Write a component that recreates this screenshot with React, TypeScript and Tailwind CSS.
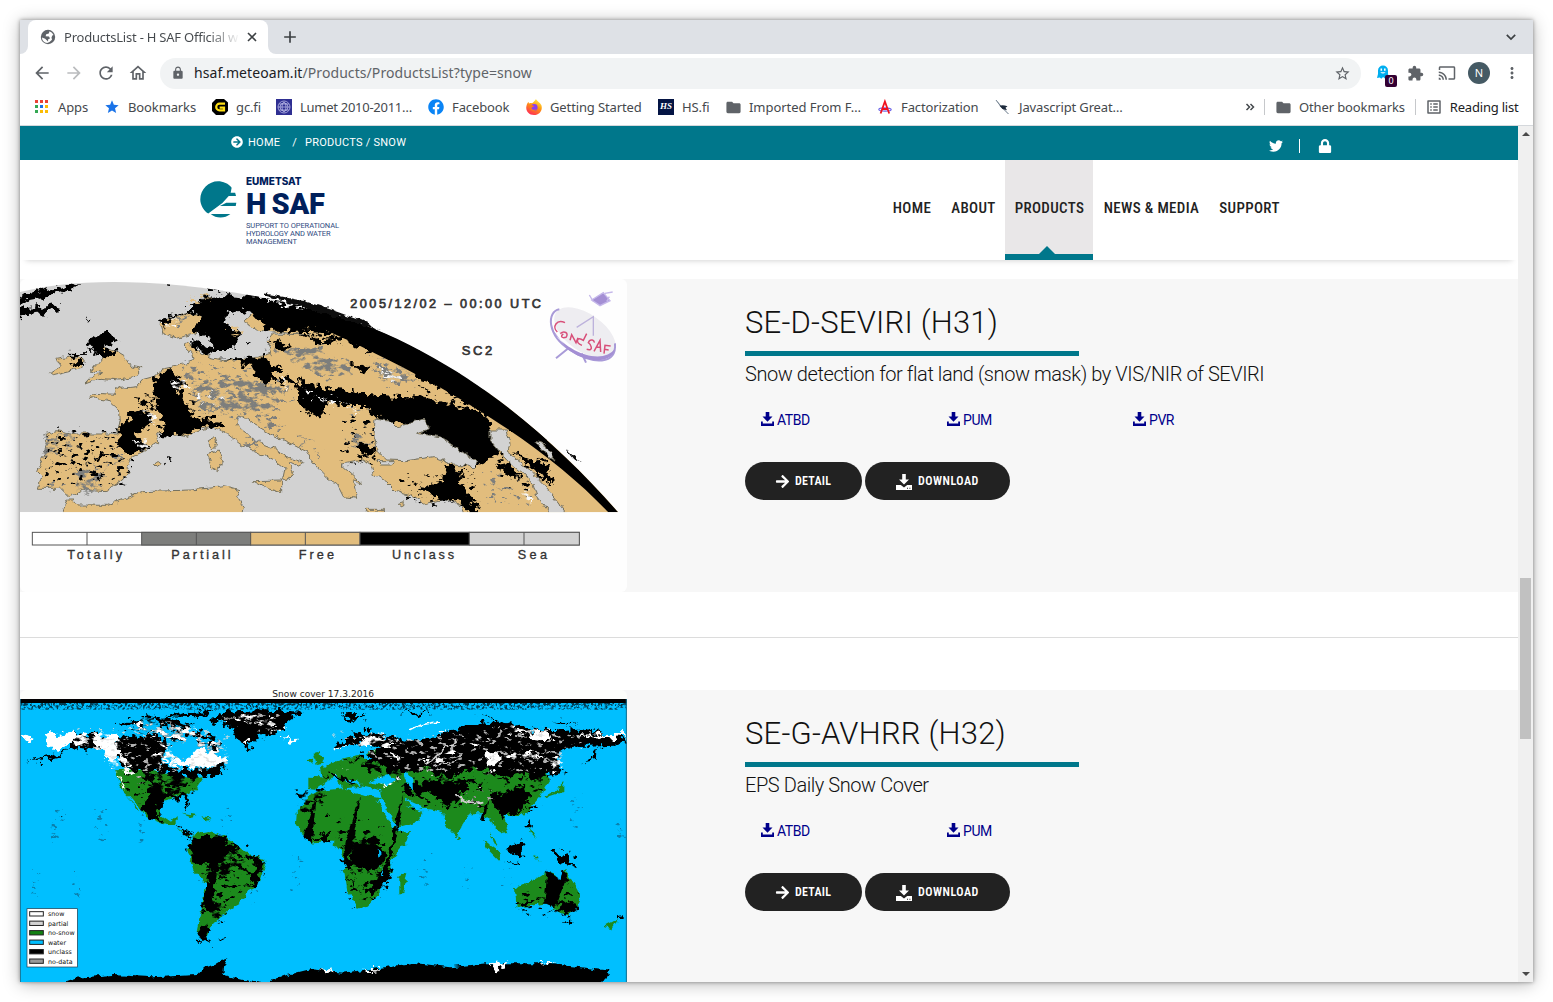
import React from "react";
import {
  MdArrowBack,
  MdArrowForward,
  MdRefresh,
  MdOutlineHome,
  MdLock,
  MdStarBorder,
  MdStar,
  MdExtension,
  MdCast,
  MdMoreVert,
  MdFolder,
  MdAdd,
  MdOutlineListAlt,
} from "react-icons/md";
import { FaTwitter, FaLock, FaArrowCircleRight, FaArrowRight, FaFacebook } from "react-icons/fa";

/* ---------- browser chrome ---------- */

function GlobeIcon() {
  return (
    <svg viewBox="0 0 16 16" className="size-4 shrink-0">
      <circle cx="8" cy="8" r="7.200" fill="#5f6368" />
      <path d="M9.500 2.200 8.800 4.500 6.200 5.200 5.600 7.200 9 7.500 10 9.500 8.200 10.200 8 12.500 5.200 9.800 1.900 8.400A6.200 6.200 0 0 0 7.200 14L9.500 13 12 10.800 11.500 8.500 12.300 6.500 13.500 6A6.200 6.200 0 0 0 9.500 2.200Z" fill="white" />
    </svg>
  );
}

function TabStrip() {
  return (
    <div className="flex h-[34px] shrink-0 bg-[#dee1e6]">
      <div className="w-2 bg-white">
        <div className="h-full rounded-br-lg bg-[#dee1e6]" />
      </div>
      <div className="flex w-60 items-center rounded-t-lg bg-white pl-3">
        <GlobeIcon />
        <span className="ml-2 w-[176px] overflow-hidden bg-linear-to-r from-[#45494d] from-82% to-transparent bg-clip-text pt-[2px] text-[13px] tracking-[-0.22px] whitespace-nowrap text-transparent">
          ProductsList - H SAF Official w
        </span>
        <svg viewBox="0 0 10 10" className="ml-[7px] size-[10px] shrink-0" stroke="#3c4043" strokeWidth="1.600">
          <path d="m1 1 8 8M9 1 1 9" />
        </svg>
      </div>
      <div className="w-2 bg-white">
        <div className="h-full rounded-bl-lg bg-[#dee1e6]" />
      </div>
      <div className="flex flex-1 items-center pr-[17px] pl-1">
        <MdAdd className="size-5 text-[#3c4043]" />
        <svg viewBox="0 0 10 10" className="ml-auto size-[10px]" fill="none" stroke="#3c4043" strokeWidth="1.700">
          <path d="m.8 2.800 4.200 4.200 4.200-4.200" />
        </svg>
      </div>
    </div>
  );
}

function Toolbar() {
  return (
    <div className="flex h-[38px] shrink-0 items-center bg-white text-[#5f6368]">
      <div className="flex w-[140px] items-center gap-3 pl-3">
        <MdArrowBack className="size-5" />
        <MdArrowForward className="size-5 text-[#babcbe]" />
        <MdRefresh className="size-5" />
        <MdOutlineHome className="size-5" />
      </div>
      <div className="flex h-[31px] w-[1201px] items-center rounded-full bg-[#f1f3f4] pr-[10px] pl-[11px]">
        <MdLock className="size-[14px]" />
        <span className="ml-[9px] pb-[2px] text-[14px] tracking-[0.08px]">
          <span className="text-[#202124]">hsaf.meteoam.it</span>/Products/ProductsList?type=snow
        </span>
        <MdStarBorder className="ml-auto size-[17px]" />
      </div>
      <div className="flex flex-1 items-center pl-[15px]">
        <div className="relative size-5">
          <svg viewBox="0 0 20 20" className="size-5">
            <path d="M1 15 2 11V7.500a5 5 0 0 1 10 0V11l1 3.500-2.500-.6-1.600 1.700-1.800-1.500-1.800 1.700-1.500-1.200Z" fill="#00aef0" />
            <path d="M4.500 5.500h1.600v2.200H4.500zM8 5.500h1.600v2.200H8zM4.200 9.200q2.700 2.600 5.400 0" fill="white" />
          </svg>
          <span className="absolute top-[12px] left-[9px] h-3 w-3 rounded-[2px] bg-[#330033] text-center text-[9px] leading-3 text-white">
            0
          </span>
        </div>
        <MdExtension className="ml-[11px] size-[17px]" />
        <MdCast className="ml-[14px] size-[18px]" />
        <span className="ml-[12px] flex size-[22px] items-center justify-center rounded-full bg-[#455a64] text-[11px] text-white">
          N
        </span>
        <MdMoreVert className="ml-[13px] size-[18px]" />
      </div>
    </div>
  );
}

function AppsIcon() {
  const colors = ["#ea4335", "#ea4335", "#ea4335", "#34a853", "#1a73e8", "#fbbc04", "#34a853", "#fbbc04", "#fbbc04"];
  return (
    <svg viewBox="0 0 16 16" className="size-4">
      {colors.map((c, i) => (
        <rect key={i} x={2 + (i % 3) * 5} y={1 + Math.floor(i / 3) * 5} width="3" height="3" fill={c} />
      ))}
    </svg>
  );
}

function GcIcon() {
  return (
    <svg viewBox="0 0 16 16" className="size-4">
      <path d="M4 0h8l4 3.500v3H16V12l-4 4H4l-4-4V4Z" fill="#000" />
      <path d="M13 4.700H7.500a3.200 3.200 0 0 0 0 6.600H12V8.600H7.600" fill="none" stroke="#ffe014" strokeWidth="2.200" />
    </svg>
  );
}

function LumetIcon() {
  return (
    <svg viewBox="0 0 16 16" className="size-4">
      <rect width="16" height="16" fill="#2f2f92" />
      <g fill="none" stroke="#b6b6e6" strokeWidth=".8">
        <circle cx="8" cy="8" r="6" />
        <circle cx="8" cy="8" r="4" />
        <ellipse cx="8" cy="8" rx="2" ry="5" />
        <path d="M2 8h12M3 5h10M3 11h10" />
      </g>
    </svg>
  );
}

function FirefoxIcon() {
  return (
    <svg viewBox="0 0 16 16" className="size-4">
      <defs>
        <linearGradient id="fox" x1=".8" y1="0" x2=".3" y2="1">
          <stop offset="0" stopColor="#fff44f" />
          <stop offset=".45" stopColor="#ff980e" />
          <stop offset="1" stopColor="#ff2a58" />
        </linearGradient>
      </defs>
      <path d="M10 0c.5 2 4 3 5.400 6.300C17 11 13.500 16 8 16S-.5 11.500.4 7.200C.8 5 1.700 3.600 2.600 3l.3 1.600C4 3.700 5 4 6 4.300 7.500 3 8.500 2.500 10 0Z" fill="url(#fox)" />
      <circle cx="8.200" cy="8.500" r="3.400" fill="#8a3ff0" />
      <path d="M3.200 6.200c2-.8 3.300.3 5 .6-.2 1.200-2.700 1-2.700 2.500 1 2.300 4 1.600 5.300.6-1 3-7.300 3.300-7.600-3.700Z" fill="#ff7a1c" />
    </svg>
  );
}

function FactorIcon() {
  return (
    <svg viewBox="0 0 16 16" className="size-4">
      <ellipse cx="8" cy="10.500" rx="6.200" ry="1.600" fill="none" stroke="#6a63e8" strokeWidth="1.200" />
      <path d="M3.600 14.500 7.900 2.500 12.200 14.500M5 10h6" fill="none" stroke="#f0121e" strokeWidth="1.800" />
    </svg>
  );
}

function GreatIcon() {
  return (
    <svg viewBox="0 0 16 16" className="size-4">
      <path d="M1 1 5 6.500 13.500 15 8 9.500Z" fill="#345" stroke="#678" strokeWidth=".6" />
      <path d="M4.500 6.800q3-1.500 8 .5L10.500 8.800l1.500 2.500-4.500-1.200Z" fill="#1d2a3c" />
    </svg>
  );
}

function Bookmark({ icon, label, className }: { icon: React.ReactNode; label: string; className: string }) {
  return (
    <div className={`flex shrink-0 items-center gap-2 whitespace-nowrap ${className}`}>
      {icon}
      <span className="pt-[2px]">{label}</span>
    </div>
  );
}

function BookmarksBar() {
  return (
    <div className="flex h-[34px] shrink-0 items-center border-b border-[#d5d8dc] bg-white pb-[3px] pl-[13px] text-[13px] tracking-[-0.12px] text-[#45494d]">
      <Bookmark className="w-[71px] gap-[9px]" icon={<AppsIcon />} label="Apps" />
      <Bookmark className="w-[108px]" icon={<MdStar className="size-4 text-[#1a73e8]" />} label="Bookmarks" />
      <Bookmark className="w-16" icon={<GcIcon />} label="gc.fi" />
      <Bookmark className="w-[152px] tracking-[-0.27px]" icon={<LumetIcon />} label="Lumet 2010-2011…" />
      <Bookmark className="w-[98px]" icon={<FaFacebook className="size-4 text-[#0a84f5]" />} label="Facebook" />
      <Bookmark className="w-[132px]" icon={<FirefoxIcon />} label="Getting Started" />
      <Bookmark
        className="w-[67px]"
        icon={
          <span className="flex size-4 items-center justify-center bg-[#041444] font-['Liberation_Serif'] text-[9px] font-bold text-white italic">
            HS
          </span>
        }
        label="HS.fi"
      />
      <Bookmark className="w-[152px] gap-[7px] tracking-[-0.05px]" icon={<MdFolder className="size-[17px] text-[#5f6368]" />} label="Imported From F…" />
      <Bookmark className="w-[118px]" icon={<FactorIcon />} label="Factorization" />
      <Bookmark className="w-[130px] tracking-[-0.15px]" icon={<GreatIcon />} label="Javascript Great…" />
      <svg viewBox="0 0 10 10" className="ml-[120px] size-[10px]" fill="none" stroke="#45494d" strokeWidth="1.500">
        <path d="m1.500 2 3 3-3 3M5.500 2l3 3-3 3" />
      </svg>
      <div className="ml-[9px] h-4 w-px bg-[#c6c8cb]" />
      <Bookmark className="ml-[10px] gap-[7px]" icon={<MdFolder className="size-[17px] text-[#5f6368]" />} label="Other bookmarks" />
      <div className="ml-[10px] h-4 w-px bg-[#c6c8cb]" />
      <Bookmark
        className="ml-[9px] gap-[7px] tracking-[-0.2px] text-[#202124]"
        icon={<MdOutlineListAlt className="size-[18px] text-[#5f6368]" />}
        label="Reading list"
      />
    </div>
  );
}

function Scrollbar() {
  return (
    <div className="flex w-[15px] shrink-0 flex-col items-center bg-[#f0f0f0]">
      <svg viewBox="0 0 8 4" className="mt-[6px] h-1 w-2">
        <path d="M0 4 4 0l4 4Z" fill="#4a4a4a" />
      </svg>
      <div className="mt-[442px] h-[161px] w-[11px] bg-[#c1c1c1]" />
      <svg viewBox="0 0 8 4" className="mt-auto mb-[6px] h-1 w-2">
        <path d="M0 0h8L4 4Z" fill="#4a4a4a" />
      </svg>
    </div>
  );
}

/* ---------- site header ---------- */

function TopBar() {
  return (
    <div className="flex h-[34px] shrink-0 bg-[#00778b] pl-[211px] text-[11px] tracking-[0.25px] text-white">
      <div className="flex h-8 items-center">
        <FaArrowCircleRight className="size-3" />
        <span className="ml-[5px] pt-[2px]">HOME</span>
        <span className="ml-[12px] pt-[2px]">/</span>
        <span className="ml-[8px] pt-[2px]">PRODUCTS / SNOW</span>
      </div>
      <div className="mr-[186px] ml-auto flex items-center pt-[6px]">
        <FaTwitter className="size-[14px]" />
        <div className="ml-[16px] h-[14px] w-px bg-white" />
        <FaLock className="ml-[18px] size-[14px]" />
      </div>
    </div>
  );
}

function Logo() {
  return (
    <div className="flex pt-4 pl-[180px] text-[#00205b]">
      <svg viewBox="0 0 38 38" className="mt-[5px] h-[37px] w-[37px]">
        <path
          d="M18.500.3C9 .3.300 8.500.300 18.900c0 5.600 3.400 11.600 8.200 14.500L23 22.500 29.500 15.300H37l-.9-3.300H31.500l1-5C29.500 2.600 23.500.3 18.500.3Z"
          fill="#00778b"
        />
        <path d="M27 22.300h10.300l-.6 3.300H20.500ZM11 33.800h20.200c-6 5-14.600 4.800-20.200 0Z" fill="#00778b" />
      </svg>
      <div className="ml-[9px] flex flex-col">
        <span className="font-[Inter] text-[10px] leading-[10px] font-extrabold">EUMETSAT</span>
        <span className="mt-[7px] text-[29px] leading-[23px] font-black tracking-[-0.1px] [word-spacing:-2px]">H SAF</span>
        <span className="mt-[6px] text-[7.500px] leading-[8px] tracking-[-0.09px] text-[#2f4a80]">
          SUPPORT TO OPERATIONAL
          <br />
          HYDROLOGY AND WATER
          <br />
          MANAGEMENT
        </span>
      </div>
    </div>
  );
}

function Nav() {
  const items = [
    { label: "HOME", w: "w-[59px]" },
    { label: "ABOUT", w: "w-16" },
    { label: "PRODUCTS", w: "w-[88px]" },
    { label: "NEWS & MEDIA", w: "w-[116px]" },
    { label: "SUPPORT", w: "w-20" },
  ];
  return (
    <nav className="mr-[229px] ml-auto flex h-full text-[15px] font-medium tracking-[0.35px] text-[#222] [font-stretch:75%]">
      {items.map((it) =>
        it.label === "PRODUCTS" ? (
          <div key={it.label} className={`relative flex h-full items-center justify-center border-b-6 border-[#00778b] bg-[#e9e7e8] pt-[3px] pl-px ${it.w}`}>
            {it.label}
            <svg viewBox="0 0 16 8" className="absolute bottom-0 left-[34px] h-2 w-4">
              <path d="M0 8 8 0l8 8Z" fill="#00778b" />
            </svg>
          </div>
        ) : (
          <div key={it.label} className={`flex h-full items-center justify-center pb-[3px] pl-px whitespace-nowrap ${it.w}`}>
            {it.label}
          </div>
        ),
      )}
    </nav>
  );
}

/* ---------- product pictures ---------- */

/* Displacement and grain filters that give the classified pixels ragged edges. */
function MapFilters() {
  return (
    <svg className="absolute size-0">
      <defs>
        <filter id="coast" x="-5%" y="-5%" width="110%" height="110%">
          <feTurbulence type="fractalNoise" baseFrequency=".05" numOctaves="2" seed="4" />
          <feDisplacementMap in="SourceGraphic" scale="20" xChannelSelector="R" yChannelSelector="G" />
        </filter>
        <filter id="ragged" x="-10%" y="-10%" width="120%" height="120%">
          <feTurbulence type="fractalNoise" baseFrequency=".045" numOctaves="3" seed="7" result="n" />
          <feDisplacementMap in="SourceGraphic" in2="n" scale="46" xChannelSelector="R" yChannelSelector="G" />
        </filter>
        <filter id="patchy" x="-10%" y="-10%" width="120%" height="120%">
          <feTurbulence type="fractalNoise" baseFrequency=".035 .06" numOctaves="4" seed="12" result="n" />
          <feColorMatrix in="n" values="0 0 0 0 0  0 0 0 0 0  0 0 0 0 0  6 0 0 0 -2.600" result="mask" />
          <feDisplacementMap in="SourceGraphic" in2="n" scale="60" xChannelSelector="B" yChannelSelector="G" result="d" />
          <feComposite in="d" in2="mask" operator="in" />
        </filter>
        <filter id="sparse" x="-10%" y="-10%" width="120%" height="120%">
          <feTurbulence type="fractalNoise" baseFrequency=".05 .08" numOctaves="3" seed="31" result="n" />
          <feColorMatrix in="n" values="0 0 0 0 0  0 0 0 0 0  0 0 0 0 0  0 10 0 0 -6.100" result="mask" />
          <feDisplacementMap in="SourceGraphic" in2="n" scale="50" xChannelSelector="B" yChannelSelector="R" result="d" />
          <feComposite in="d" in2="mask" operator="in" />
        </filter>
        <filter id="grain" x="-10%" y="-10%" width="120%" height="120%">
          <feTurbulence type="fractalNoise" baseFrequency=".13" numOctaves="3" seed="9" result="n" />
          <feColorMatrix in="n" values="0 0 0 0 0  0 0 0 0 0  0 0 0 0 0  0 4 0 0 -1.800" result="mask" />
          <feComposite in="SourceGraphic" in2="mask" operator="in" />
        </filter>
      </defs>
    </svg>
  );
}

function SeviriMap() {
  return (
    <svg viewBox="30 27 1821 939" preserveAspectRatio="none" className="h-[313px] w-[607px] rounded-md bg-[#fefefe]">
      <clipPath id="globe">
        <path d="M30 66C200 22 500 15 930 120C1300 225 1600 470 1825 727H30Z" />
      </clipPath>
      <g clipPath="url(#globe)">
        <rect x="30" y="27" width="1821" height="700" fill="#d2d2d2" />
        {/* land */}
        <g fill="#e2bd7d" stroke="#75715f" strokeWidth="3" filter="url(#coast)">
          <path d="M105 490 140 482 200 492 320 492 328 450 325 415 300 392 238 382 255 370 315 373 313 350 335 355 380 350 400 328 430 320 465 293 480 290 520 282 550 272 545 250 522 228 535 218 560 240 600 262 640 272 700 268 740 262 785 250 772 215 790 192 900 195 780 185 740 180 702 152 730 130 790 128 860 160 1000 170 1200 230 1830 600 1840 760H1375L1350 705 1325 690 1290 690 1240 702 1210 680 1160 665 1130 635 1090 612 1085 585 1060 570 1010 580 990 582 1055 640 1030 632 1040 685 1000 680 980 640 950 622 910 580 890 545 830 515 780 490 730 462 700 440 676 445 690 475 740 515 800 538 830 562 880 578 870 590 835 574 850 605 832 635 818 628 825 595 790 570 740 545 690 522 650 490 610 470 570 480 530 500 470 490 440 488 446 515 400 545 365 560 350 590 362 608 330 635 290 662 220 658 180 680 155 655 85 655 95 620 80 605 95 570 112 520Z" />
          <path d="M450 155 540 125 600 150 560 190 500 205 460 190Z" />
          <path d="M150 750 172 690 190 690 200 705 290 706 360 680 400 665 540 660 640 650 665 655 690 662 680 680 700 710 692 750Z" />
          <path d="M258 290 285 255 270 230 320 245 345 260 362 288 396 294 375 322 330 330 270 325 225 342 248 318 275 308 240 300Z" />
          <path d="M122 308 150 290 140 265 180 258 220 270 215 292 180 302 130 314Z" />
          <path d="M595 512 615 502 622 525 608 540 595 525ZM592 555 625 543 640 575 622 602 605 595ZM728 632 815 630 815 668 770 655Z" />
          <path d="M430 580 445 575 455 583 442 592ZM1065 718h55v8h-50ZM1165 700 1180 695 1178 708Z" />
        </g>
        <g fill="#d2d2d2" filter="url(#coast)">
          <path d="M650 130 715 120 690 160 720 200 760 205 775 250 700 240 690 200 650 160Z" />
        </g>
        {/* partial snow */}
        <g fill="#7d7e7c" filter="url(#patchy)">
          <path d="M560 340 640 325 720 320 830 355 830 375 760 385 760 430 660 430 560 410ZM600 350H800V425H620ZM740 430 830 470 800 480 750 460Z" />
          <path d="M770 230 930 230 1000 300 960 330 860 280ZM920 280 1000 260 1030 310 940 320ZM1080 290 1180 290 1230 330 1130 345Z" />
          <path d="M110 500 200 490 150 560 105 560ZM200 590 300 590 250 670 200 670ZM300 560 340 560 320 590ZM860 495 905 515 880 525ZM700 500 750 520 740 540ZM490 140 540 135 500 175Z" />
          <path d="M520 290 570 320 540 330ZM915 530 935 540 925 560ZM1000 505 1080 500 1100 520 1020 530Z" />
        </g>
        <g fill="#7d7e7c" filter="url(#sparse)">
          <path d="M110 490H340V640H200L110 660ZM520 280 800 290 850 400 760 450 560 430ZM1000 420H1100V540H1000ZM1430 610H1600V700H1430ZM1080 240 1210 270 1230 340 1080 300Z" />
        </g>
        {/* unclassified */}
        <g fill="#000" filter="url(#ragged)">
          <path d="M0 82 190 40 205 50 100 82 0 102ZM0 118 145 106 150 124 0 142ZM230 143 248 145 237 152ZM440 30 530 38 520 46ZM590 44 645 58 600 60Z" />
          <path d="M540 100 600 80 640 75 780 85 930 105 1110 150 1260 210 1440 320 1640 470 1640 510 1570 500 1480 455 1380 400 1290 350 1230 330 1180 265 1080 240 1000 215 960 190 880 185 780 185 740 140 700 120 650 130 640 160 690 190 670 240 610 240 600 200 540 180 575 145 540 130Z" />
          <path d="M450 145 540 125 470 155 465 180ZM540 215 610 235 600 255 545 235ZM708 208 724 216 710 225Z" />
          <path d="M240 210 290 185 325 212 280 228 315 250 290 265 235 238ZM180 278 220 273 218 295 190 292ZM175 248 235 250 200 260Z" />
          <path d="M435 320 480 295 530 350 500 350 530 395 545 440 645 450 640 467 560 475 535 498 450 492 480 460 440 420 440 370ZM325 475 370 430 400 415 435 455 370 495 425 535 370 548 330 530ZM385 393 435 402 400 412ZM450 430 540 430 540 495 470 480Z" />
          <path d="M640 266 760 262 820 300 790 300 800 345 750 330 715 285ZM860 335 930 350 1100 375 1230 380 1300 395 1380 415 1440 445 1450 495 1480 540 1420 585 1370 590 1300 540 1250 520 1200 460 1150 460 1100 445 1060 405 1000 405 950 400 930 450 870 410Z" />
          <path d="M812 318 870 330 830 348ZM1015 283 1075 293 1060 313ZM775 203 850 232 820 245ZM870 193 990 205 950 232Z" />
          <path d="M1240 660 1300 625 1310 590 1365 600 1345 640 1390 690 1415 740 1380 735 1340 690 1290 692ZM1455 588 1500 583 1545 625 1500 618ZM1500 540 1600 580 1630 640 1600 620ZM1045 518 1105 538 1060 562ZM1260 650 1230 680Z" />
          <path d="M145 492 168 492 155 515ZM235 538 268 536 248 550ZM250 560 305 558 260 577ZM320 520 350 512 415 530 350 550ZM462 570 484 572 470 580ZM192 578 218 580 200 592ZM258 620 278 622 262 634Z" />
        </g>
        <g fill="#000" filter="url(#sparse)">
          <path d="M110 480H360V640H110ZM380 370H560V480H380ZM1200 240 1400 360 1480 460 1380 430 1240 390ZM1000 440H1100V580H1000ZM1180 610H1400V700H1180ZM1440 560H1620V660H1500Z" />
        </g>
        <g fill="#e2bd7d" filter="url(#patchy)">
          <path d="M530 85 610 78 590 92 540 97ZM930 165 1080 185 1090 230 1000 210ZM1100 250 1200 285 1220 330 1150 290ZM1270 350 1360 410 1350 430 1280 380ZM1430 440 1540 490 1530 512 1470 485ZM660 165 695 190 670 195ZM870 178 960 210 940 225ZM1580 520 1650 565 1620 570Z" />
        </g>
        {/* solid rim along the limb */}
        <path d="M880 100C1300 225 1600 470 1825 727L1795 727C1600 520 1290 330 880 150Z" fill="#000" />
        <g fill="#d2d2d2" stroke="#75715f" strokeWidth="3" filter="url(#coast)">
          <path d="M1095 445 1140 450 1160 470 1240 450 1258 475 1220 490 1290 500 1400 575 1395 590 1330 585 1270 560 1190 572 1130 570 1105 545 1092 500Z" />
          <path d="M1440 480 1490 480 1500 520 1490 545 1560 600 1640 690 1690 760 1640 760 1580 680 1570 640 1490 570 1440 510Z" />
          <path d="M1575 515 1600 520 1635 570 1610 560ZM1100 575 1150 575 1145 585 1110 585Z" />
        </g>
        <g fill="#f8f8f8" filter="url(#patchy)">
          <path d="M455 160 490 145 490 175ZM400 425 440 430 430 465ZM460 335 525 328 530 352 480 348ZM370 508 425 513 390 548ZM550 378 660 368 640 392 560 392ZM880 353 920 368 900 380ZM920 378 1010 398 1050 425 960 400ZM1105 298 1165 320 1140 340ZM815 328 842 338 825 355ZM1540 655 1565 680 1550 705ZM760 88 840 94 900 118 840 108Z" />
        </g>
      </g>
      <path d="M765 70 880 92 960 118 1050 150 1112 180 1040 160 900 118 770 80ZM1665 536 1712 576 1690 568Z" fill="#111" filter="url(#coast)" />
      {/* legend */}
      <g stroke="#555" strokeWidth="3">
        <rect x="67" y="787" width="1641" height="38" fill="#fff" />
        <rect x="395" y="787" width="327" height="38" fill="#7d7e7c" />
        <rect x="722" y="787" width="328" height="38" fill="#e2bd7d" />
        <rect x="1050" y="787" width="328" height="38" fill="#000" />
        <rect x="1378" y="787" width="330" height="38" fill="#d2d2d2" />
        <path d="M231 787v38M559 787v38M886 787v38M1542 787v38" />
      </g>
      <g fill="#333" stroke="#333" strokeWidth="1" fontFamily="Liberation Sans" fontSize="38">
        <text x="172" y="867" textLength="164">Totally</text>
        <text x="484" y="867" textLength="178">Partiall</text>
        <text x="866" y="867" textLength="106">Free</text>
        <text x="1146" y="867" textLength="186">Unclass</text>
        <text x="1523" y="867" textLength="88">Sea</text>
        <text x="1021" y="114" textLength="572" fontSize="38" strokeWidth="2">
          2005/12/02 – 00:00 UTC
        </text>
        <text x="1355" y="254" textLength="92" fontSize="39" strokeWidth="2">
          SC2
        </text>
      </g>
      {/* satellite dish emblem */}
      <g>
        <ellipse cx="1725" cy="188" rx="106" ry="56" transform="rotate(35 1725 188)" fill="#eeedf1" />
        <path d="M1648 118C1610 125 1610 195 1680 240S1820 285 1815 220M1675 235 1638 265M1715 250 1728 278" fill="none" stroke="#a99bd8" strokeWidth="6" />
        <path d="M1700 172 1750 140V197" fill="none" stroke="#bdb2dc" strokeWidth="4" />
        <path d="M1625 175C1660 245 1780 290 1815 235 1810 285 1720 280 1670 235Z" fill="#a48fd4" />
        <path d="M1745 90 1780 68 1800 92 1770 107ZM1738 75 1750 95M1785 70 1808 66M1790 95 1798 80" fill="#a48fd4" stroke="#c5b8ea" strokeWidth="4" />
        <path
          d="M1675 152C1650 140 1635 165 1652 180M1661 185C1672 175 1688 182 1678 196 1665 200 1660 192 1670 186M1690 205 1695 188 1708 212 1714 197M1726 220C1705 212 1710 190 1730 205L1740 185M1740 232C1765 238 1750 215 1745 212 1750 198 1765 205 1762 212M1762 238 1780 205 1782 240M1768 226H1782M1792 245 1795 220 1812 222M1793 232 1806 234"
          transform="translate(-10 6)"
          fill="none"
          stroke="#d8507a"
          strokeWidth="4.500"
        />
      </g>
    </svg>
  );
}

function SnowCoverMap() {
  const legend = [
    ["snow", "#fff"],
    ["partial", "#d3d3d3"],
    ["no-snow", "#128012"],
    ["water", "#00bfff"],
    ["unclass", "#000"],
    ["no-data", "#999"],
  ];
  return (
    <svg viewBox="30 30 1821 876" preserveAspectRatio="none" className="h-[292px] w-[607px] rounded-t-md">
      <rect x="30" y="30" width="1821" height="876" fill="#fdfefb" />
      <text x="787" y="50" fontFamily="DejaVu Sans" fontSize="27" textLength="305" lengthAdjust="spacingAndGlyphs" fill="#222">
        Snow cover 17.3.2016
      </text>
      <rect x="30" y="57" width="1821" height="849" fill="#00bfff" />
      <rect x="30" y="57" width="1821" height="12" fill="#000" />
      <rect x="30" y="69" width="1821" height="9" fill="#002030" filter="url(#grain)" />
      <rect x="30" y="69" width="1821" height="20" fill="#003a50" filter="url(#grain)" />
      {/* snow free land */}
      <g fill="#1e8a1e" filter="url(#coast)">
        <path d="M312 268 400 265 500 285 560 292 582 288 555 330 530 345 450 365 450 405 480 425 500 405 500 435 470 435 410 410 390 385 360 350 330 320Z" />
        <path d="M352 348 388 392 380 390ZM515 398 560 405 545 410ZM570 412 608 415 590 422ZM500 440 530 470 545 472 520 455Z" />
        <path d="M555 460 600 453 640 470 690 500 712 520 762 540 765 558 742 618 710 632 690 668 650 690 640 705 605 735 590 770 560 755 590 610 550 572 533 510Z" />
        <path d="M860 398 895 350 925 333 1000 325 1050 345 1110 355 1145 420 1160 455 1200 453 1190 485 1140 545 1142 580 1108 615 1105 645 1070 680 1040 686 1012 630 1003 580 1008 550 988 510 965 482 900 488 880 465 858 430ZM1165 590 1192 575 1180 640 1165 640Z" />
        <path d="M895 290 935 292 930 265 960 250 1010 235 1060 225 1095 205 1200 240 1400 250 1560 240 1620 300 1590 350 1555 390 1535 405 1480 405 1495 455 1470 460 1440 420 1420 400 1380 400 1335 470 1310 440 1300 400 1230 385 1180 375 1240 395 1220 425 1155 445 1115 360 1110 330 1060 320 1040 300 1000 300 1060 320 1000 325 975 280 960 300 925 325 895 320ZM910 218 925 216 945 248 920 252ZM888 238 910 233 907 252Z" />
        <path d="M1420 480 1475 520 1470 545 1430 505ZM1440 455 1465 500 1450 490ZM1600 350 1640 330 1660 305 1660 335 1610 352ZM1585 320 1597 335 1583 337ZM1343 463 1354 478 1341 480ZM1555 458 1575 472ZM1558 438 1580 477 1558 452ZM1570 518 1592 550 1573 532Z" />
        <path d="M1515 625 1580 595 1610 575 1630 580 1650 605 1665 572 1690 605 1715 650 1695 690 1665 705 1610 670 1520 685ZM1782 740 1825 718 1805 748Z" />
      </g>
      {/* unclassified */}
      <g fill="#000" filter="url(#ragged)">
        <path d="M180 165 240 158 330 175 360 165 470 172 475 205 450 240 500 268 600 265 655 242 640 272 600 288 540 292 430 280 380 275 330 250 290 215 180 205ZM50 245 150 218 180 205 140 232Z" />
        <path d="M440 325 530 345 538 385 518 352 460 355 440 400 460 422 415 417 395 380 410 350ZM400 280 460 320 430 312ZM498 430 522 440 517 460 550 474Z" />
        <path d="M455 108 530 93 625 90 560 112ZM600 118 640 96 760 90 875 98 835 125 820 150 745 178 712 205 685 185 665 145ZM320 128 400 123 330 147ZM470 150 600 160 620 185 560 170ZM410 108 520 125 540 150 450 132Z" />
        <path d="M555 470 640 465 660 510 630 540 620 580 608 650 605 690 575 700 590 610 600 560 545 540 535 510ZM730 525 765 545 740 620 712 628 735 590ZM570 740 600 745 590 775 610 792 575 784 560 755ZM600 645 640 700 590 690ZM650 490 690 515 670 530ZM700 522 738 533 715 548Z" />
        <path d="M900 478 960 458 960 484ZM1150 440 1165 450 1145 545 1130 610 1100 640 1080 620 1135 530ZM1030 490 1100 480 1125 530 1100 570 1010 560ZM1015 590 1060 640 1100 620 1090 650 1030 615Z" />
        <path d="M970 205 1020 165 1070 155 1150 170 1180 185 1280 170 1320 150 1400 135 1470 120 1530 140 1600 150 1660 150 1720 145 1860 180 1810 197 1700 202 1650 220 1640 240 1660 280 1600 290 1580 300 1540 275 1480 290 1400 265 1310 295 1250 265 1200 275 1130 270 1080 240 1040 235 1110 205 1050 190Z" />
        <path d="M1250 298 1320 308 1380 305 1320 380 1290 370 1270 340 1180 340 1180 318ZM1440 350 1500 330 1545 325 1557 370 1510 408 1470 402 1450 370ZM1510 333 1545 318 1552 350ZM1490 510 1540 478 1532 534ZM1620 512 1672 518 1702 560 1650 547ZM1638 673 1692 663 1702 695 1660 707ZM1668 718 1694 720 1680 736ZM1817 703 1840 700 1825 718Z" />
        <path d="M935 283 1000 288 1052 322 1000 303ZM1727 245 1764 203 1757 242ZM1400 100 1505 128 1470 126ZM995 106 1075 105 1020 120ZM1635 125 1705 126 1660 132ZM1168 99 1272 98 1220 107ZM1543 430 1563 418 1557 443ZM1548 383 1559 392 1550 398ZM1485 546 1522 548 1520 554ZM1518 675 1572 658 1545 688ZM150 403 162 412 152 412ZM628 772 647 768 640 776Z" />
      </g>
      <g fill="#000" filter="url(#coast)">
        <path d="M120 920 200 893 310 885 430 892 560 885 575 868 620 850 655 828 642 860 640 885 700 900 760 910 830 885 900 868 1000 878 1100 865 1210 848 1320 862 1430 850 1600 850 1700 860 1800 872 1770 920Z" />
        {/* orbit gaps */}
        <path d="M922 335 905 490 880 470ZM1050 348 1028 490 1010 560 1000 500ZM1180 345 1163 445 1150 440ZM1436 350 1424 430 1412 420ZM1612 572 1664 605 1636 685 1603 670ZM1658 568 1680 605 1650 605Z" />
      </g>
      <g fill="#000" filter="url(#patchy)">
        <path d="M560 480 700 520 700 560 620 600ZM400 270 560 290 500 340 420 350ZM1020 480 1110 470 1120 560 1010 560ZM1280 290 1400 300 1320 360ZM1000 240 1180 250 1180 310ZM1560 250 1620 300 1540 290ZM470 150 620 175 640 240 500 240ZM400 110 560 130 480 180 330 140ZM590 640 650 690 620 730ZM860 330 960 340 880 400Z" />
      </g>
      <g fill="#000" filter="url(#sparse)">
        <path d="M560 470 720 500 740 620 600 700ZM330 280H560V350H360ZM960 400 1120 440 1130 640 1020 680 1000 560ZM1200 280H1600V380H1200ZM1520 640 1700 620 1700 700H1530Z" />
      </g>
      {/* snow */}
      <g fill="#fff" filter="url(#ragged)">
        <path d="M105 165 190 155 195 180 155 208 110 200ZM25 163 78 178 55 186ZM260 172 320 165 328 215 310 245 270 215ZM465 240 530 235 560 200 600 215 650 245 600 260 520 262ZM820 178 868 176 850 192Z" />
        <path d="M1430 225 1460 210 1470 240 1430 275ZM1560 150 1610 155 1620 185 1570 180ZM1700 160 1860 163 1840 174 1720 167ZM965 208 1025 193 985 208ZM1280 153 1312 148 1290 164ZM1148 222 1172 228 1155 236ZM1430 850 1495 846 1460 868ZM1590 846 1645 846 1620 856ZM925 868 975 873 950 880ZM1058 866 1112 868 1080 878ZM698 180 724 178 712 194Z" />
      </g>
      <g fill="#fff" filter="url(#patchy)">
        <path d="M280 180 350 240 370 285 310 265ZM350 135 480 130 600 165 600 185 480 180ZM180 160 330 165 340 200 200 195ZM760 130 830 140 790 165ZM450 190 640 200 650 260 440 250ZM640 116 700 112 820 125 700 130Z" />
        <path d="M1040 180 1120 165 1180 195 1050 195ZM1480 215 1620 225 1660 250 1640 280 1600 235 1490 235ZM1460 140 1560 145 1640 190 1600 180ZM1240 240 1330 200 1340 220 1250 260ZM1380 180 1450 185 1400 195ZM1100 303 1180 298 1170 315ZM970 273 1012 268 990 282Z" />
      </g>
      <g fill="none" stroke="#fff" strokeWidth="5" filter="url(#coast)">
        <path d="M325 290 345 328M330 220 350 260M1200 150 1230 135 1290 125" />
        <path d="M1260 250Q1290 210 1340 180M1270 260Q1330 240 1350 240M1335 345Q1370 375 1420 365" stroke="#ccc" />
      </g>
      <g fill="#ddd" opacity=".8" filter="url(#sparse)">
        <path d="M180 150H650V270H330ZM960 160 1250 165 1600 140 1750 170 1600 270 1200 280ZM340 270H400V320ZM1370 330H1450V370H1370ZM660 100 820 100 780 160Z" />
      </g>
      {/* water gaps and inland seas */}
      <g fill="#00bfff" filter="url(#coast)">
        <path d="M475 200 520 190 540 165 570 190 560 205 530 240 490 225ZM1180 290 1190 275 1210 300 1212 325 1200 320ZM1075 305 1130 285 1160 300 1130 312ZM1100 360 1118 360 1160 440 1150 442ZM1185 355 1240 380 1220 394ZM1050 210 1085 238 1060 236ZM1103 508 1112 520 1105 527ZM1110 558 1120 588 1114 588Z" />
      </g>
      {/* faint swath noise over the oceans */}
      <g fill="#0a6f98" opacity=".8" filter="url(#sparse)">
        <path d="M125 380h30v110h-30ZM255 390h30v100h-30ZM385 410h20v80h-20ZM640 390h20v80h-20ZM1680 350h30v110h-30ZM1230 530h20v100h-20ZM1360 540h15v90h-15ZM850 530h20v90h-20ZM720 630h20v40h-20ZM1485 560h20v60h-20ZM65 570h15v80h-15ZM190 580h20v70h-20ZM1820 420h15v60h-15Z" />
      </g>
      {/* legend */}
      <rect x="51" y="686" width="151" height="175" fill="#fff" stroke="#234" strokeWidth="2" />
      {legend.map(([name, color], i) => (
        <g key={name}>
          <rect x="59" y={695 + i * 28.400} width="41" height="13" fill={color} stroke="#222" strokeWidth="3" />
          <text x="114" y={709 + i * 28.400} fontFamily="DejaVu Sans" fontSize="19" fill="#111">
            {name}
          </text>
        </g>
      ))}
      <path d="M31 57V906M1849 57V906" stroke="#1b6f8c" strokeWidth="3" />
    </svg>
  );
}

/* ---------- product cards ---------- */

function DownloadGlyph() {
  return (
    <svg viewBox="0 0 13 14" className="h-[14px] w-[13px]" fill="#00008b">
      <path d="M4.700 0h3.600v4.500H11.500L6.500 9.800 1.500 4.500h3.200ZM0 9.500h1.800v2h9.400v-2H13V14H0Z" />
    </svg>
  );
}

function DownloadSolid() {
  return (
    <svg viewBox="0 0 16 16" className="size-4" fill="#fff">
      <path d="M6.200 0h3.600v5.500H13L8 10.600 3 5.500h3.200Z" />
      <path d="M0 11h4.800L8 13.500l3.200-2.500H16v5H0Zm11 2.800v1h1v-1Zm2.400 0v1h1v-1Z" fillRule="evenodd" />
    </svg>
  );
}

function Product({ title, subtitle, docs, picture }: { title: string; subtitle: string; docs: string[]; picture: React.ReactNode }) {
  return (
    <section className="flex h-[313px] shrink-0 bg-[#f7f7f7] text-[#222]">
      <div className="w-[607px] shrink-0">{picture}</div>
      <div className="flex flex-col items-start pl-[118px]">
        <h2 className="mt-[23px] text-[31px] leading-[42px] font-light tracking-[0.22px] text-[#111]">{title}</h2>
        <div className="mt-[7px] h-[5px] w-[334px] bg-[#00778b]" />
        <p className="mt-[3px] text-[20px] leading-[30px] font-light tracking-[-0.43px] text-[#111]">{subtitle}</p>
        <div className="mt-[20px] flex pl-4 text-[14px] leading-[22px] tracking-[-0.45px] text-[#00008b]">
          {docs.map((d) => (
            <a key={d} className="flex w-[186px] items-center gap-[3px]">
              <span className="pb-[2px]">
                <DownloadGlyph />
              </span>
              {d}
            </a>
          ))}
        </div>
        <div className="mt-[31px] flex gap-[3px] text-[12px] font-semibold text-white [font-stretch:75%]">
          <button className="flex h-[38px] w-[117px] items-center rounded-full bg-[#222] pl-[30px] tracking-[0.25px]">
            <FaArrowRight className="mr-[5px] size-[15px]" />
            DETAIL
          </button>
          <button className="flex h-[38px] w-[145px] items-center rounded-full bg-[#222] pl-[31px] tracking-[0.5px]">
            <span className="mr-[6px] pt-[2px]">
              <DownloadSolid />
            </span>
            DOWNLOAD
          </button>
        </div>
      </div>
    </section>
  );
}

export default function App() {
  return (
    <div className="h-[1002px] w-[1553px] overflow-hidden bg-white p-5 font-['Noto_Sans',sans-serif]">
      <div className="flex h-[962px] w-[1513px] flex-col overflow-hidden bg-white shadow-[0_2px_16px_rgba(0,0,0,0.28),0_0_4px_rgba(0,0,0,0.4)]">
        <TabStrip />
        <Toolbar />
        <BookmarksBar />
        <div className="flex min-h-0 flex-1">
          <main className="flex w-[1498px] flex-col overflow-hidden bg-white font-[Roboto,sans-serif]">
            <MapFilters />
            <TopBar />
            <header className="flex h-[100px] shrink-0 shadow-[0_6px_6px_-6px_rgba(0,0,0,0.22)]">
              <Logo />
              <Nav />
            </header>
            <div className="h-[19px] shrink-0" />
            <Product
              title="SE-D-SEVIRI (H31)"
              subtitle="Snow detection for flat land (snow mask) by VIS/NIR of SEVIRI"
              docs={["ATBD", "PUM", "PVR"]}
              picture={<SeviriMap />}
            />
            <div className="flex h-[98px] shrink-0 flex-col pt-[45px]">
              <div className="h-px bg-[#dcdcdc]" />
            </div>
            <Product title="SE-G-AVHRR (H32)" subtitle="EPS Daily Snow Cover" docs={["ATBD", "PUM"]} picture={<SnowCoverMap />} />
          </main>
          <Scrollbar />
        </div>
      </div>
    </div>
  );
}
